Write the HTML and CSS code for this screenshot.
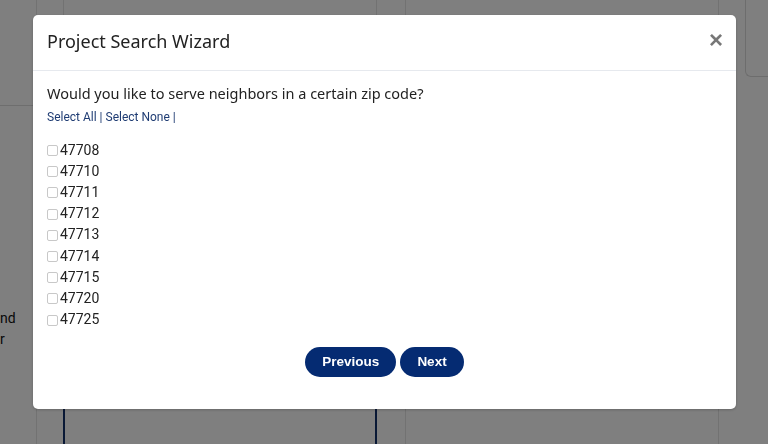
FILE: index.html
```html
<!DOCTYPE html>
<html lang="en">
<head>
    <meta charset="UTF-8">
    <meta name="viewport" content="width=device-width, initial-scale=1.0">
    <title>Project Search Wizard</title>
    <link rel="stylesheet" href="styles.css">
</head>
<body>
    <!-- page behind the modal -->
    <div class="page">
        <aside class="side">
            <div class="side-top"></div>
            <div class="side-text">nd<br>r</div>
        </aside>
        <div class="gap"></div>
        <section class="col">
            <div class="col-head">Neighbor Role Wizard</div>
            <div class="col-body">
                <div class="col-box"></div>
            </div>
        </section>
        <div class="gap wide"></div>
        <section class="col">
            <div class="col-head">Neighbor Match Management</div>
            <div class="col-body"></div>
        </section>
        <div class="gap"></div>
        <aside class="side-right">
            <div class="mini-card"></div>
        </aside>
    </div>

    <div class="backdrop"></div>

    <div class="modal">
        <div class="modal-header">
            <h2>Project Search Wizard</h2>
            <button class="close" aria-label="Close">&times;</button>
        </div>
        <div class="modal-body">
            <p class="question">Would you like to serve neighbors in a certain zip code?</p>
            <div class="select-links">
                <a href="#">Select All</a> | <a href="#">Select None</a> |
            </div>

            <ul class="zip-list">
                <li><label><input type="checkbox"> 47708</label></li>
                <li><label><input type="checkbox"> 47710</label></li>
                <li><label><input type="checkbox"> 47711</label></li>
                <li><label><input type="checkbox"> 47712</label></li>
                <li><label><input type="checkbox"> 47713</label></li>
                <li><label><input type="checkbox"> 47714</label></li>
                <li><label><input type="checkbox"> 47715</label></li>
                <li><label><input type="checkbox"> 47720</label></li>
                <li><label><input type="checkbox"> 47725</label></li>
            </ul>

            <div class="actions">
                <button class="btn">Previous</button>
                <button class="btn">Next</button>
            </div>
        </div>
    </div>
</body>
</html>
```

FILE: styles.css
```css
* {
    margin: 0;
    padding: 0;
    box-sizing: border-box;
}

body {
    font-family: Roboto, "Liberation Sans", sans-serif;
    background: #fff;
    color: #222;
    height: 444px;
    overflow: hidden;
}

/* background page */
.page {
    display: flex;
    height: 444px;
}

.side {
    width: 37px;
    border-right: 1px solid #e4e4e4;
    display: flex;
    flex-direction: column;
}

.side-top {
    height: 106px;
    border-bottom: 1px solid #dcdcdc;
}

.side-text {
    margin-top: 202px;
    font-size: 14px;
    line-height: 21px;
    color: #111;
}

.gap {
    width: 26px;
}

.gap.wide {
    width: 28px;
}

.col {
    width: 314px;
    border-left: 1px solid #e4e4e4;
    border-right: 1px solid #e4e4e4;
    display: flex;
    flex-direction: column;
}

.col-head {
    height: 76px;
    padding-top: 13px;
    text-align: center;
    font-weight: 700;
    font-size: 14px;
    color: #0b2b6b;
    border-bottom: 1px solid #e4e4e4;
}

.col-body {
    flex: 1;
    padding-top: 330px;
}

.col-box {
    height: 100%;
    margin-left: -1px;
    margin-right: -1px;
    border-left: 2px solid #13306a;
    border-right: 2px solid #13306a;
}

.side-right {
    flex: 1;
}

.mini-card {
    height: 77px;
    border-left: 1px solid #dadada;
    border-bottom: 1px solid #dadada;
    border-bottom-left-radius: 6px;
}

.backdrop {
    position: fixed;
    inset: 0;
    background: rgba(0, 0, 0, 0.5);
}

/* modal */
.modal {
    position: fixed;
    top: 15px;
    left: 33px;
    width: 703px;
    height: 394px;
    background: #fff;
    border-radius: 5px;
    box-shadow: 0 1px 3px rgba(0, 0, 0, 0.2);
}

.modal-header {
    display: flex;
    align-items: center;
    justify-content: space-between;
    height: 56px;
    padding: 0 14px;
    border-bottom: 1px solid #e6e9ee;
}

.modal-header h2 {
    font-family: "Noto Sans", sans-serif;
    font-weight: 400;
    font-size: 18px;
    color: #222;
    margin-top: -3px;
}

.close {
    border: none;
    background: none;
    font-family: "Liberation Sans", sans-serif;
    font-size: 24px;
    font-weight: 700;
    color: #777;
    line-height: 1;
    margin-right: -1px;
    margin-top: -6px;
    cursor: pointer;
}

.modal-body {
    padding: 12px 14px 0;
}

.question {
    font-family: "Noto Sans", sans-serif;
    font-size: 14.5px;
    line-height: 20px;
    color: #222;
}

.select-links {
    margin-top: 7px;
    font-size: 12px;
    color: #1f3c73;
}

.select-links a {
    color: #1f3c73;
    text-decoration: none;
}

.zip-list {
    list-style: none;
    margin-top: 15px;
}

.zip-list li {
    height: 21.2px;
    display: flex;
    align-items: center;
}

.zip-list label {
    display: flex;
    align-items: center;
    gap: 1px;
    font-size: 14px;
    color: #222;
}

.zip-list input {
    width: 11px;
    height: 11px;
    margin: 2px 1px 0 0;
    appearance: none;
    border: 1px solid #c8c8c8;
    border-radius: 2px;
    background: #fff;
}

.actions {
    display: flex;
    justify-content: center;
    gap: 4px;
    margin-top: 17px;
}

.btn {
    background: #052b72;
    color: #fff;
    border: none;
    border-radius: 15px;
    height: 30px;
    padding: 0 17px;
    font-family: "Liberation Sans", sans-serif;
    font-weight: 700;
    font-size: 13.5px;
    cursor: pointer;
}
```
